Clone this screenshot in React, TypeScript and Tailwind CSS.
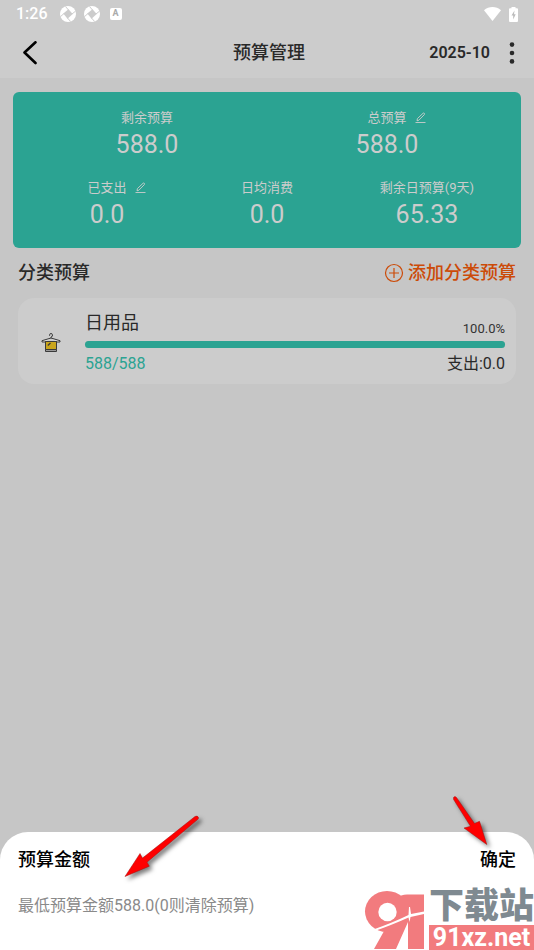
import { useState } from 'react';

const category = { name: '日用品', used: 588, total: 588, spent: '0.0' };

function ApertureIcon() {
  return (
    <svg viewBox="0 0 16 16" className="size-4">
      <circle cx="8" cy="8" r="8" fill="#fff" />
      <path d="M8.500 3.300 12.700 8 7.500 12.700 3.300 7.500Z" fill="#ccc" />
      <path d="M8.500 4 5.500.5M12 8l3.700-3M7.500 12l3.200 3.600M4 7.500.3 10.800" stroke="#ccc" strokeWidth="1" />
    </svg>
  );
}

function StatusBar() {
  return (
    <div className="flex h-7 items-center px-4 text-white">
      <span className="text-base font-medium">1:26</span>
      <div className="ml-3 flex items-center gap-2">
        <ApertureIcon />
        <ApertureIcon />
        <span className="ml-0.5 flex size-3 items-center justify-center rounded-xs bg-white text-[9px] font-bold text-[#aaa]">
          A
        </span>
      </div>
      <div className="ml-auto flex items-center gap-2">
        <svg viewBox="0 0 17 14" className="h-3.5 w-[17px]" fill="#fff">
          <path d="M8.500 14 0 3.200C4.800-1 12.200-1 17 3.200Z" />
        </svg>
        <svg viewBox="0 0 9 15" className="h-[15px] w-[9px]">
          <path d="M2.500 0h4v1.200H8q1 0 1 1V14q0 1-1 1H1q-1 0-1-1V2.200q0-1 1-1h1.500Z" fill="#fff" />
          <path d="M5.500 3.500 2.500 8.500h1.700v4L6.700 7.300H5Z" fill="#bbb" />
        </svg>
      </div>
    </div>
  );
}

function PencilIcon() {
  return (
    <svg viewBox="0 0 11 12" className="h-3 w-[11px]" fill="none" stroke="currentColor" strokeWidth="0.9">
      <path d="M.5 10.500h10M2 8.800l.4-2.200L8 1.300q.6-.6 1.300 0t0 1.400L3.900 8.200Z" />
    </svg>
  );
}

type StatProps = { label: string; value: string; editable?: boolean };

function Stat({ label, value, editable }: StatProps) {
  return (
    <div className="flex flex-1 flex-col items-center">
      <div className="relative text-[13px] leading-5">
        {label}
        {editable && (
          <button type="button" aria-label={label} className="absolute top-1 left-full ml-2">
            <PencilIcon />
          </button>
        )}
      </div>
      <div className="text-[25px] leading-[34px]">{value}</div>
    </div>
  );
}

function HangerIcon() {
  return (
    <svg viewBox="0 0 20 20" className="size-5" fill="none" stroke="#3a3a3a" strokeWidth="1">
      <path d="M8.600 2.800V1.600q0-1 1.400-1t1.400 1v1.600L10 4v1.200" />
      <path d="M10 5 1 7.700V9h3M10 5l9 2.700V9h-3M4 8.500h12" fill="#ddd" />
      <path d="M4.500 8.500h11v8h-11Z" fill="#c9a51c" />
      <path d="M4.500 16.500h11v2h-11Z" fill="#999" />
      <path d="m6.800 12.500 2.700-2.400" strokeWidth="1.300" />
    </svg>
  );
}

function CategoryCard() {
  const percent = (category.used / category.total) * 100;

  return (
    <div className="flex items-center rounded-2xl bg-[#ccc] pt-[11px] pr-[11px] pb-2 pl-[23px]">
      <HangerIcon />
      <div className="ml-6 flex-1">
        <div className="flex items-end justify-between">
          <span className="text-lg leading-7">{category.name}</span>
          <span className="text-[13px] leading-4 text-[#333]">{percent.toFixed(1)}%</span>
        </div>
        <div
          role="progressbar"
          aria-label={category.name}
          aria-valuenow={percent}
          className="mt-1 h-[7px] rounded-full bg-[#b5b5b5]"
        >
          <div className="h-full rounded-full bg-[#2ba392]" style={{ width: `${percent}%` }} />
        </div>
        <div className="mt-1 flex justify-between text-base leading-6">
          <span className="text-[#2ba392]">
            {category.used}/{category.total}
          </span>
          <span>支出:{category.spent}</span>
        </div>
      </div>
    </div>
  );
}

function Arrows() {
  return (
    <>
      <svg viewBox="0 0 80 70" className="absolute bottom-[68px] left-[121px] h-[70px] w-20 drop-shadow-[3px_3px_2px_rgba(0,0,0,0.5)]">
        <path d="M74 4.500q2.500-1.200 3.400.8.500 1.200-.5 2L26 50.200l2.300 4L4 64.500 19 41.500l2.500 4.600Z" fill="#fe0000" stroke="#a01010" strokeWidth="0.5" />
      </svg>
      <svg viewBox="0 0 44 56" className="absolute right-[42px] bottom-[101px] h-14 w-11 drop-shadow-[3px_3px_2px_rgba(0,0,0,0.5)]">
        <path d="M5.500 4.500q1.400-1.800 3 0L26.500 30.500l5-2.200 7.300 23.200L16 35l6.500-1.700L5.600 6.500Z" fill="#fe0000" stroke="#a01010" strokeWidth="0.5" />
      </svg>
    </>
  );
}

function SiteMark() {
  return (
    <div className="pointer-events-none absolute right-0 bottom-0 flex">
      <svg viewBox="0 0 67 64" className="h-16 w-[67px] self-end" fill="#f27b7e" role="img" aria-label="91">
        <ellipse cx="25" cy="25.500" rx="22" ry="20.500" />
        <path d="M34 12Q39 8.500 45 8.500H62V63H46V36L34 63H12L26 38Z" />
        <circle cx="25.500" cy="26" r="9.200" fill="#fff" />
        {/* slash across the ring */}
        <path d="M10 44Q30 37 46.500 29L47 21h1l1 7L62 25.500v2.500L48.500 31 47.500 36l-1-4.500Q30 39 10 46Z" fill="#fff" />
      </svg>
      <div className="flex flex-col justify-end">
        <div className="text-[35px] leading-9 font-black text-[#7f8a91]">下载站</div>
        <div className="h-[25px] bg-[#f27b7e] text-center text-[25px] leading-[25px] font-bold text-white">
          91xz.net
        </div>
      </div>
    </div>
  );
}

export default function App() {
  const [amount, setAmount] = useState('');

  return (
    <div className="relative flex min-h-screen flex-col bg-[#c6c6c6] font-[Roboto,'Noto_Sans_CJK_SC',sans-serif] text-[#292929]">
      <header className="bg-[#ccc]">
        <StatusBar />
        <div className="grid h-[50px] grid-cols-3 items-center pr-4 pl-5">
          <button type="button" aria-label="返回" className="justify-self-start text-black">
            <svg viewBox="0 0 20 24" className="h-6 w-5" fill="none" stroke="currentColor" strokeWidth="2.600" strokeLinecap="round" strokeLinejoin="round">
              <path d="M15.500 1.300 4.500 11.500l11 10.500" />
            </svg>
          </button>
          <h1 className="text-center text-lg font-medium">预算管理</h1>
          <div className="flex items-center justify-end gap-4">
            <button type="button" className="text-base font-semibold">2025-10</button>
            <button type="button" aria-label="更多">
              <svg viewBox="0 0 12 22" className="h-[22px] w-3" fill="currentColor">
                <circle cx="6" cy="2.600" r="2.300" />
                <circle cx="6" cy="11" r="2.300" />
                <circle cx="6" cy="19.400" r="2.300" />
              </svg>
            </button>
          </div>
        </div>
      </header>

      <main>
        {/* Budget summary */}
        <section className="mx-[13px] mt-3.5 rounded-md bg-[#2ba392] px-3.5 py-4 text-[#ccc]">
          <div className="flex">
            <Stat label="剩余预算" value="588.0" />
            <Stat label="总预算" value="588.0" editable />
          </div>
          <div className="mt-4 flex">
            <Stat label="已支出" value="0.0" editable />
            <Stat label="日均消费" value="0.0" />
            <Stat label="剩余日预算(9天)" value="65.33" />
          </div>
        </section>

        {/* Category budgets */}
        <section className="px-[18px]">
          <div className="flex h-[50px] items-center justify-between text-lg font-medium">
            <h2>分类预算</h2>
            <button type="button" className="flex items-center gap-1 text-[#cc4b08]">
              <svg viewBox="0 0 20 20" className="size-5" fill="none" stroke="currentColor" strokeWidth="1.200">
                <circle cx="10" cy="10" r="8.500" />
                <path d="M10 5v10M5 10h10" />
              </svg>
              添加分类预算
            </button>
          </div>
          <CategoryCard />
        </section>
      </main>

      {/* Bottom sheet */}
      <form className="mt-auto rounded-t-[28px] bg-white px-[18px] pt-3.5 pb-8">
        <div className="flex items-center justify-between text-lg font-medium text-black">
          <label htmlFor="amount">预算金额</label>
          <button type="button">确定</button>
        </div>
        <input
          id="amount"
          value={amount}
          onChange={(e) => setAmount(e.target.value)}
          placeholder="最低预算金额588.0(0则清除预算)"
          className="mt-5 block h-6 w-full text-base outline-none placeholder:text-[#8a8a8a]"
        />
      </form>

      <Arrows />
      <SiteMark />
    </div>
  );
}
